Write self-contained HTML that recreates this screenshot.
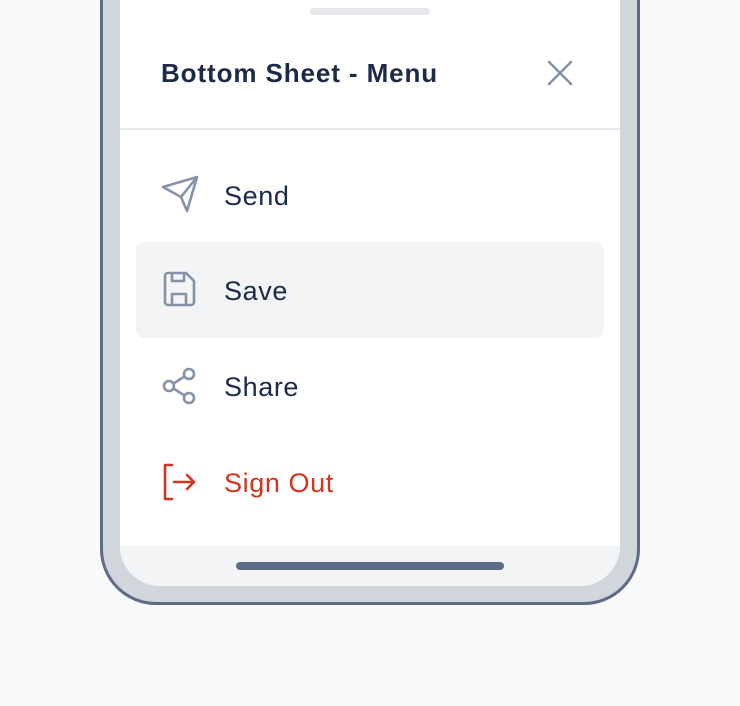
<!DOCTYPE html>
<html><head><style>
body{margin:0;width:740px;height:706px;background:#f8f9fb;position:relative;overflow:hidden;font-family:"Liberation Sans",sans-serif}
.frame{position:absolute;left:100px;top:-60px;width:534px;height:659px;border:3px solid #5d6b85;border-radius:56px;background:#d1d5dc}
.screen{position:absolute;left:120px;top:-40px;width:500px;height:626px;background:#fff;border-radius:0 0 40px 40px;overflow:hidden}
.bottom{position:absolute;left:0;top:586px;width:500px;height:40px;background:#f3f4f6}
.bar{position:absolute;left:116px;top:602px;width:268px;height:8px;border-radius:4px;background:#5d6b85}
.handle{position:absolute;left:190px;top:48px;width:120px;height:7px;border-radius:4px;background:#e5e7eb}
.title{position:absolute;left:41px;top:98px;font-size:26px;letter-spacing:0.9px;font-weight:bold;color:#1a2a47}
.div{position:absolute;left:0;top:168px;width:500px;height:2px;background:#e5e7eb}
.item{position:absolute;left:16px;width:468px;height:96px;border-radius:8px}
.item span{position:absolute;left:88px;top:34px;font-size:27px;letter-spacing:0.6px;color:#1a2a47}
.item svg{position:absolute;left:24px;top:28px}
</style></head><body>
<div class="frame"></div>
<div class="screen">
<div class="handle"></div>
<div class="title">Bottom Sheet - Menu</div>
<svg style="position:absolute;left:426px;top:99px" width="28" height="28" viewBox="0 0 28 28"><path d="M3 3L25 25M25 3L3 25" stroke="#8592a8" stroke-width="2.6" stroke-linecap="round"/></svg>
<div class="div"></div>
<div class="item" style="top:187px"><svg width="44" height="40" viewBox="0 0 44 40"><path d="M3 12L37 2L27 36L21 22Z M21 22L37 2" fill="none" stroke="#8592a8" stroke-width="2.6" stroke-linejoin="round"/></svg><span>Send</span></div>
<div class="item" style="top:282px;background:#f3f4f6"><svg width="44" height="40" viewBox="0 0 44 40"><path d="M5 6a3 3 0 0 1 3-3h18l8 8v21a3 3 0 0 1-3 3H8a3 3 0 0 1-3-3Z M12 35V24h14v11 M12 3v8h12V3" fill="none" stroke="#8592a8" stroke-width="2.6" stroke-linejoin="round"/></svg><span>Save</span></div>
<div class="item" style="top:378px"><svg width="44" height="40" viewBox="0 0 44 40"><circle cx="9" cy="20" r="5" fill="none" stroke="#8592a8" stroke-width="2.6"/><circle cx="29" cy="8" r="5" fill="none" stroke="#8592a8" stroke-width="2.6"/><circle cx="29" cy="32" r="5" fill="none" stroke="#8592a8" stroke-width="2.6"/><path d="M13.5 17.5L24.5 10.5M13.5 22.5L24.5 29.5" stroke="#8592a8" stroke-width="2.6"/></svg><span>Share</span></div>
<div class="item" style="top:474px"><svg width="44" height="40" viewBox="0 0 44 40"><path d="M12 3H5v34h7 M14 20h20 M27 13l7 7-7 7" fill="none" stroke="#d1341f" stroke-width="2.6" stroke-linecap="round" stroke-linejoin="round"/></svg><span style="color:#d1341f">Sign Out</span></div>
<div class="bottom"></div>
<div class="bar"></div>
</div>
</body></html>
